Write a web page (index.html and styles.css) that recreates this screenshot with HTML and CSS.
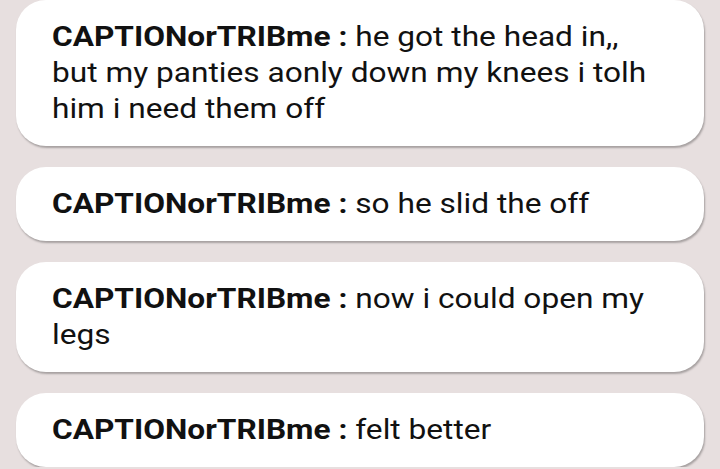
FILE: index.html
```html
<!DOCTYPE html>
<html>
<head>
<meta charset="utf-8">
<link rel="stylesheet" href="styles.css">
</head>
<body>
<div class="chat">
  <div class="bubble"><p class="text"><span class="name">CAPTIONorTRIBme :</span> he got the head in,, but my panties aonly down my knees i tolh him i need them off</p></div>
  <div class="bubble"><p class="text"><span class="name">CAPTIONorTRIBme :</span> so he slid the off</p></div>
  <div class="bubble"><p class="text"><span class="name">CAPTIONorTRIBme :</span> now i could open my legs</p></div>
  <div class="bubble"><p class="text"><span class="name">CAPTIONorTRIBme :</span> felt better</p></div>
</div>
</body>
</html>
```
FILE: styles.css
```css
html, body {
  margin: 0;
  padding: 0;
  background: #e7dfdf;
}
body {
  font-family: Roboto, "Liberation Sans", sans-serif;
  color: #111;
}
.chat {
  display: flex;
  flex-direction: column;
  gap: 21px;
  padding: 0 16px;
}
.bubble {
  background: #ffffff;
  border-radius: 30px;
  padding: 19px 40px 19px 36px;
  box-shadow: 1px 2px 2px rgba(0, 0, 0, 0.28);
}
.text {
  margin: 0;
  width: 542px;
  font-size: 28px;
  line-height: 36px;
  transform: scaleX(1.13);
  transform-origin: left center;
}
.name {
  font-weight: 700;
}
```
